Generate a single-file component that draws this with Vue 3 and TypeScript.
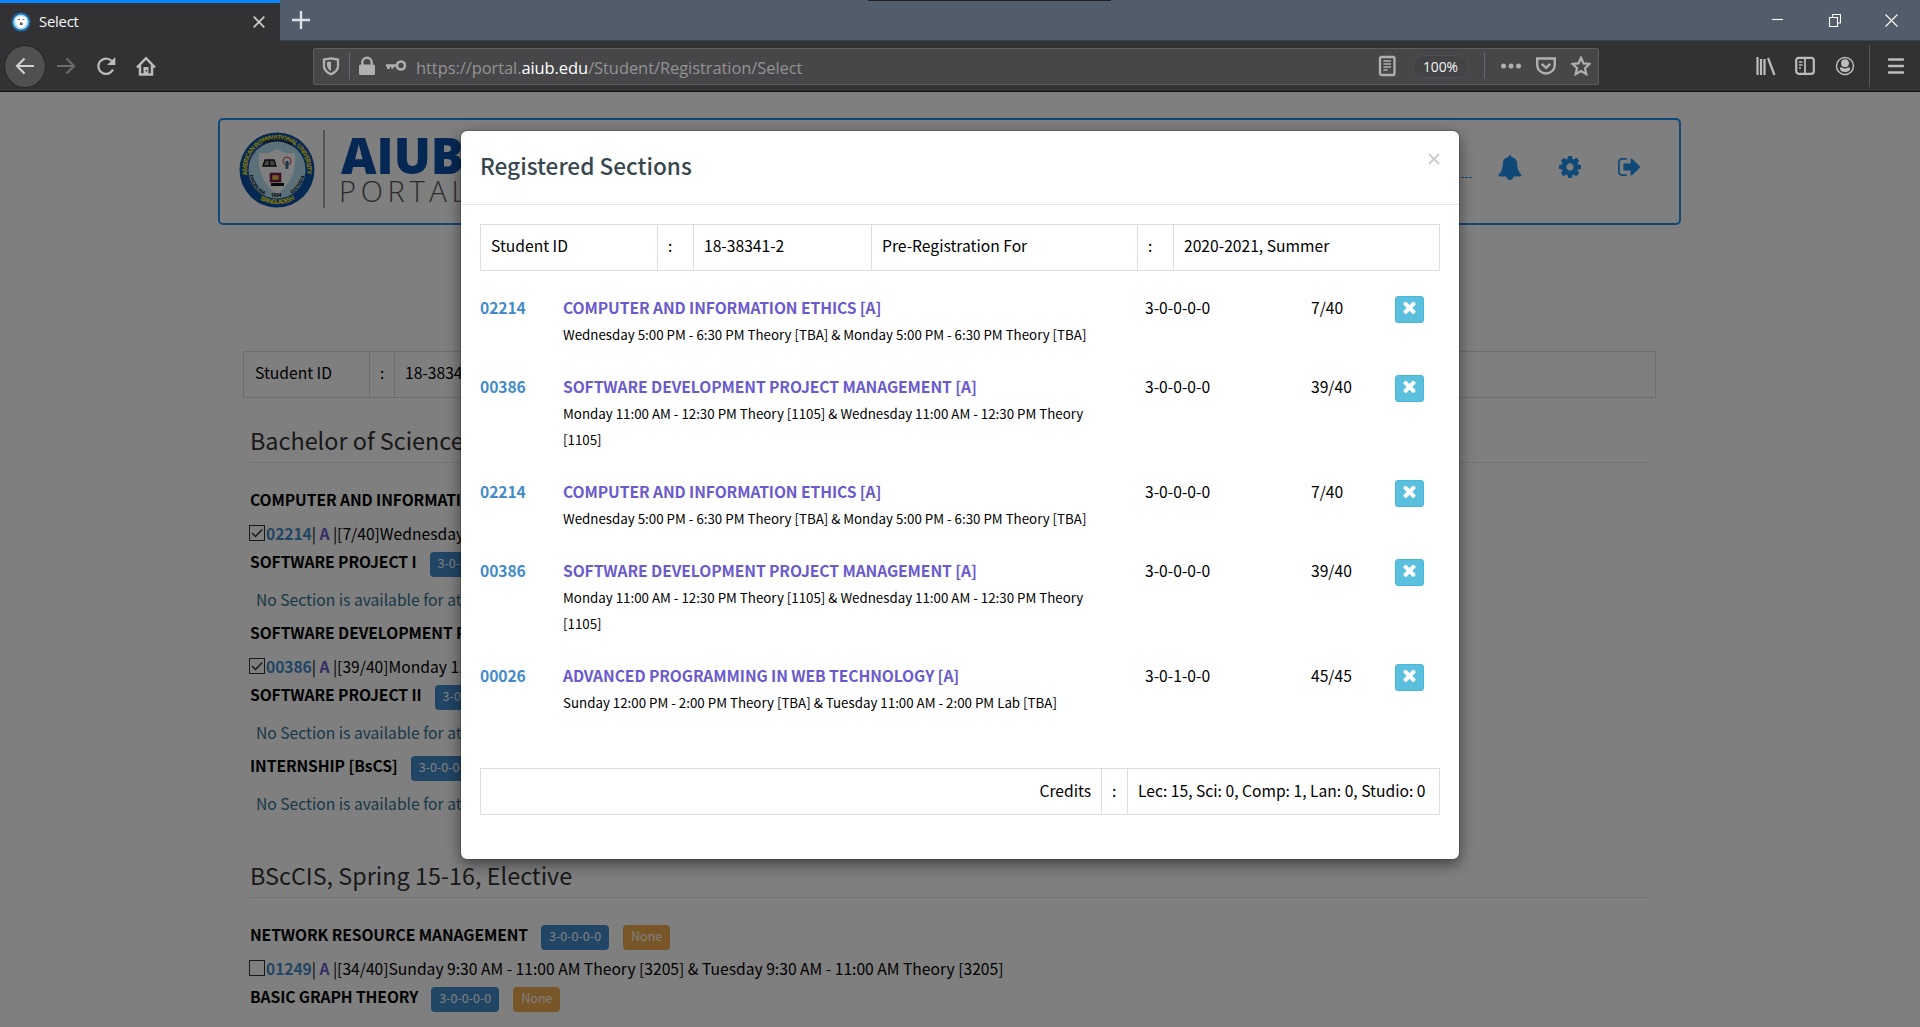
<script setup lang="ts">
interface Section {
  id: string
  title: string
  time: string
  credit: string
  count: string
}

interface Course {
  title: string
  credit?: string
  prerequisite?: string
  section?: { id: string; text: string; checked: boolean }
}

const ethics: Section = {
  id: '02214',
  title: 'COMPUTER AND INFORMATION ETHICS [A]',
  time: 'Wednesday 5:00 PM - 6:30 PM Theory [TBA] & Monday 5:00 PM - 6:30 PM Theory [TBA]',
  credit: '3-0-0-0-0',
  count: '7/40',
}
const management: Section = {
  id: '00386',
  title: 'SOFTWARE DEVELOPMENT PROJECT MANAGEMENT [A]',
  time: 'Monday 11:00 AM - 12:30 PM Theory [1105] & Wednesday 11:00 AM - 12:30 PM Theory [1105]',
  credit: '3-0-0-0-0',
  count: '39/40',
}
const sections: Section[] = [
  ethics,
  management,
  ethics,
  management,
  {
    id: '00026',
    title: 'ADVANCED PROGRAMMING IN WEB TECHNOLOGY [A]',
    time: 'Sunday 12:00 PM - 2:00 PM Theory [TBA] & Tuesday 11:00 AM - 2:00 PM Lab [TBA]',
    credit: '3-0-1-0-0',
    count: '45/45',
  },
]

const groups: { name: string; courses: Course[] }[] = [
  {
    name: 'Bachelor of Science',
    courses: [
      { title: 'COMPUTER AND INFORMATI', section: { id: '02214', text: '[7/40]Wednesday', checked: true } },
      { title: 'SOFTWARE PROJECT I', credit: '3-0-0-0-0' },
      { title: 'SOFTWARE DEVELOPMENT P', section: { id: '00386', text: '[39/40]Monday 11', checked: true } },
      { title: 'SOFTWARE PROJECT II', credit: '3-0-0-0-0' },
      { title: 'INTERNSHIP [BsCS]', credit: '3-0-0-0-0' },
    ],
  },
  {
    name: 'BScCIS, Spring 15-16, Elective',
    courses: [
      {
        title: 'NETWORK RESOURCE MANAGEMENT',
        credit: '3-0-0-0-0',
        prerequisite: 'None',
        section: {
          id: '01249',
          text: '[34/40]Sunday 9:30 AM - 11:00 AM Theory [3205] & Tuesday 9:30 AM - 11:00 AM Theory [3205]',
          checked: false,
        },
      },
      { title: 'BASIC GRAPH THEORY', credit: '3-0-0-0-0', prerequisite: 'None' },
    ],
  },
]
</script>

<template>
  <div class="browser">
    <div class="tabs">
      <div class="tab">
        <svg class="favicon" viewBox="0 0 20 20">
          <circle cx="10" cy="10" r="9.5" fill="#1d6fae" />
          <circle cx="10" cy="10" r="7.6" fill="#a8dcf5" />
          <path d="M4.500 5.500 10 4l5.500 1.500v5q-1 4-5.500 6-4.500-2-5.500-6z" fill="#fff" />
          <path d="M6.500 7.500h2.500M11.500 7.500h2" stroke="#777" fill="none" />
          <path d="M9 10.500h2.500v2.500H9z" fill="#643" />
        </svg>
        <span class="tab-name">Select</span>
        <svg class="tab-close" viewBox="0 0 12 12"><path d="M.7.7l10.600 10.600M11.300.7.7 11.300" /></svg>
      </div>
      <svg class="plus" viewBox="0 0 18 18"><path d="M9 0v18M0 9h18" /></svg>
      <div class="notch"></div>
      <div class="window-buttons">
        <svg viewBox="0 0 13 13"><path d="M1 5.500h11" /></svg>
        <svg viewBox="0 0 13 13"><path d="M1.500 3.500h8v9h-8zM4.500 3.500v-3h8v8.500H9.500" /></svg>
        <svg viewBox="0 0 13 13"><path d="M.5.5l12 12M12.500.5l-12 12" /></svg>
      </div>
    </div>

    <div class="toolbar">
      <div class="back"><svg class="ico" viewBox="0 0 20 20"><path d="M19 10H2M9.500 2.500 2 10l7.500 7.500" /></svg></div>
      <svg class="ico forward" viewBox="0 0 20 20"><path d="M1 10h17M10.500 2.500 18 10l-7.500 7.500" /></svg>
      <svg class="ico reload" viewBox="0 0 20 20"><path d="M15.500 4.800A7.700 7.700 0 1 0 17 13.500" /><path class="fill" d="M19.300 1v8H11z" /></svg>
      <svg class="ico home" viewBox="0 0 20 20"><path d="M1 11.500 10 2.200l9 9.300M4 9.500v9h12v-9" stroke-width="2.500" /><path class="fill" d="M7.500 11h5v8h-5z" /><path d="M10.500 14v1.500" stroke="#333" stroke-width="1.500" /></svg>
      <div class="urlbar">
        <svg class="ico shield" viewBox="0 0 20 20"><path d="M10 2.300 17 3.500v6.800c0 3.500-3.500 6.500-7 8-3.500-1.500-7-4.500-7-8V3.500z" stroke-width="2.300" /><path class="fill" d="M10 5.500v9.500c-2.500-1.500-4-3.500-4-5.500V6z" /></svg>
        <i class="bar"></i>
        <svg class="ico lock" viewBox="0 0 20 20"><path d="M5.300 9V6.500a4.700 4.700 0 0 1 9.400 0V9" stroke-width="2.400" /><rect class="fill" x="2" y="8.500" width="16" height="10.500" rx="1.500" /></svg>
        <svg class="ico key" viewBox="0 0 20 20"><circle cx="15" cy="9.500" r="4" stroke-width="2.600" /><path d="M11 9.500H0M2.500 9v4M6.500 9v3.500" stroke-width="2.600" /></svg>
        <span class="url">https://portal.<b>aiub.edu</b>/Student/Registration/Select</span>
        <svg class="ico reader" viewBox="0 0 20 20"><rect x="3" y="1" width="14.500" height="18" rx="1.500" stroke-width="2.300" /><path d="M6.500 5h7.500M6.500 8h7.500M6.500 11h7.500M6.500 14h4" stroke-width="1.400" /></svg>
        <span class="zoom">100%</span>
        <i class="bar bar-right"></i>
        <svg class="ico more" viewBox="0 0 20 20"><circle class="fill" cx="2.500" cy="10" r="2.500" /><circle class="fill" cx="10" cy="10" r="2.500" /><circle class="fill" cx="17.500" cy="10" r="2.500" /></svg>
        <svg class="ico pocket" viewBox="0 0 20 20"><path d="M1.200 2.500h17.600V9a8.800 8.500 0 0 1-17.600 0z" stroke-width="2.400" /><path d="M5.800 7.800 10 11.800l4.200-4" stroke-width="2.500" /></svg>
        <svg class="ico star" viewBox="0 0 20 20"><path d="M10 1.800l2.500 5.600 6 .6-4.500 4.100 1.300 6-5.300-3.100-5.300 3.100 1.300-6L1.500 8l6-.6z" /></svg>
      </div>
      <svg class="ico library" viewBox="0 0 20 20"><path d="M1.500 1v18M5 3v16M8.500 3v16M12 2l6.500 17" /></svg>
      <svg class="ico sidebar" viewBox="0 0 20 20"><rect x="1.200" y="1.800" width="17.600" height="16" rx="2.500" /><path d="M10 2v16" stroke-width="1.800" /><path d="M4 6h3.500M4 9h3.500M4 12h2" stroke-width="1.300" /></svg>
      <svg class="ico account" viewBox="0 0 20 20"><circle cx="10" cy="10" r="8.500" stroke-width="1.500" /><circle class="fill" cx="10" cy="7.200" r="3.900" /><path class="fill" d="M4.800 11.500h2.200q3 2 6 0h2.200q0 4.500-5.200 4.500t-5.200-4.500z" /></svg>
      <i class="split"></i>
      <svg class="ico menu" viewBox="0 0 20 20"><path d="M3 3.500h14M3 10h14M3 16.500h14" stroke-width="2.400" stroke-linecap="round" /></svg>
    </div>

    <div class="page">
      <header class="portal">
        <svg class="seal" viewBox="0 0 76 76">
          <defs>
            <path id="seal-top" d="M8.500 43A30 30 0 1 1 67.500 43" />
            <path id="seal-bottom" d="M17 65A34.500 34.500 0 0 0 59 65" />
            <path id="seal-left" d="M10 38A28 28 0 0 0 29 64.500" />
            <path id="seal-right" d="M47 64.500A28 28 0 0 0 66 38" />
            <path id="seal-inner" d="M18 20A24 24 0 0 1 58 20" />
          </defs>
          <circle cx="38" cy="38" r="37.500" fill="#0b51a5" />
          <circle cx="38" cy="38" r="28.500" fill="#b9e1f3" />
          <path d="M38 16c-3 4-10 6-18 5-1 14 2 30 18 41 16-11 19-27 18-41-8 1-15-1-18-5z" fill="#fff" />
          <g class="seal-gold">
            <text><textPath href="#seal-top" textLength="104">AMERICAN INTERNATIONAL UNIVERSITY</textPath></text>
            <text><textPath href="#seal-bottom" startOffset="5" textLength="36">BANGLADESH</textPath></text>
          </g>
          <g class="seal-black">
            <text><textPath href="#seal-inner" startOffset="10">PRAESIDIUM</textPath></text>
            <text><textPath href="#seal-left" startOffset="5">DISCIPLINA</textPath></text>
            <text><textPath href="#seal-right" startOffset="6">CUSTODIA</textPath></text>
            <text x="32" y="65">1994</text>
          </g>
          <path d="M24 34l2-6h9l2 6zM30.500 28v6" fill="#888" stroke="#111" stroke-width="1.300" />
          <path d="M48 29v8" stroke="#197fa8" stroke-width="3" />
          <circle cx="48" cy="29" r="4" fill="none" stroke="#d33" />
          <path d="M32 42h9v7h-9z" fill="#e7bf4b" stroke="#7a1748" stroke-width="2.500" />
          <path d="M32 52.500h13" stroke="#111" stroke-width="3" />
        </svg>
        <i class="logo-line"></i>
        <div class="brand"><strong>AIUB</strong><span>PORTAL</span></div>
        <div class="actions">
          <i class="dots"></i>
          <svg class="bell" viewBox="64 0 1664 1792"><path d="M1728 1408q0 52-38 90t-90 38h-448q0 106-75 181t-181 75-181-75-75-181h-448q-52 0-90-38t-38-90q50-42 91-88t85-119.500 74.500-158.500 50-206 19.500-260q0-152 117-282.500t307-158.500q-8-19-8-39 0-40 28-68t68-28 68 28 28 68q0 20-8 39 190 28 307 158.500t117 282.500q0 139 19.500 260t50 206 74.500 158.500 85 119.500 91 88z" /></svg>
          <svg class="cog" viewBox="0 -128 1536 1536"><path fill-rule="evenodd" d="M1024 640q0 106-75 181t-181 75-181-75-75-181 75-181 181-75 181 75 75 181zm512-109v222q0 12-8 23t-20 13l-185 28q-19 54-39 91 35 50 107 138 10 12 10 25t-9 23q-27 37-99 108t-94 71q-12 0-26-9l-138-108q-44 23-91 38-16 136-29 186-7 28-36 28h-222q-14 0-24.500-8.500t-11.500-21.500l-28-184q-49-16-90-37l-141 107q-10 9-25 9-14 0-25-11-126-114-165-168-7-10-7-23 0-12 8-23 15-21 51-66.500t54-70.500q-27-50-41-99l-183-27q-13-2-21-12.500t-8-23.500v-222q0-12 8-23t19-13l186-28q14-46 39-92-40-57-107-138-10-12-10-24 0-10 9-23 26-36 98.500-107.500t94.500-71.500q13 0 26 10l138 107q44-23 91-38 16-136 29-186 7-28 36-28h222q14 0 24.500 8.500t11.500 21.500l28 184q49 16 90 37l142-107q9-9 24-9 13 0 25 10 129 119 165 170 7 8 7 22 0 12-8 23-15 21-51 66.500t-54 70.500q26 50 41 98l183 28q13 2 21 12.500t8 23.500z" /></svg>
          <svg class="exit" viewBox="64 256 1568 1280"><path d="M704 1440q0 4 1 20t.5 26.500-3 23.500-10 19.500-20.500 6.500h-320q-119 0-203.500-84.500t-84.500-203.500v-704q0-119 84.500-203.500t203.500-84.500h320q13 0 22.500 9.500t9.500 22.500q0 4 1 20t.5 26.500-3 23.500-10 19.500-20.500 6.500h-320q-66 0-113 47t-47 113v704q0 66 47 113t113 47h312l11.500 1 11.500 3 8 5.500 7 9 2 13.500zm928-544q0 26-19 45l-544 544q-19 19-45 19t-45-19-19-45v-288h-448q-26 0-45-19t-19-45v-384q0-26 19-45t45-19h448v-288q0-26 19-45t45-19 45 19l544 544q19 19 19 45z" /></svg>
        </div>
      </header>

      <div class="info page-info">
        <span class="cell">Student ID</span><span class="cell">:</span><span class="cell">18-38341-2</span>
      </div>

      <section v-for="group in groups" :key="group.name" class="group">
        <h2>{{ group.name }}</h2>
        <template v-for="course in group.courses" :key="course.title">
          <div class="course">
            <strong>{{ course.title }}</strong>
            <span v-if="course.credit" class="badge">{{ course.credit }}</span>
            <span v-if="course.prerequisite" class="badge orange">{{ course.prerequisite }}</span>
          </div>
          <div v-if="course.section" class="pick">
            <svg class="check" viewBox="0 0 16 16"><rect x=".5" y=".5" width="15" height="15" /><path v-if="course.section.checked" d="M3 8l3.500 3.500L13.200 4.500" /></svg>
            <b class="code">{{ course.section.id }}</b>|&nbsp;<b class="letter">A</b>&nbsp;|{{ course.section.text }}
          </div>
          <div v-else-if="!course.prerequisite" class="empty">No Section is available for at</div>
        </template>
      </section>

      <div class="backdrop">
        <div class="modal">
          <div class="modal-head">
            <h1>Registered Sections</h1>
            <svg viewBox="0 0 12 12"><path d="M1 1l10 10M11 1 1 11" /></svg>
          </div>
          <div class="modal-body">
            <div class="info modal-info">
              <span class="cell">Student ID</span><span class="cell">:</span><span class="cell">18-38341-2</span>
              <span class="cell">Pre-Registration For</span><span class="cell">:</span><span class="cell">2020-2021, Summer</span>
            </div>
            <div v-for="(s, i) in sections" :key="i" class="row">
              <b class="row-id">{{ s.id }}</b>
              <div class="row-main">
                <b>{{ s.title }}</b>
                <p>{{ s.time }}</p>
              </div>
              <span class="row-credit">{{ s.credit }}</span>
              <span class="row-count">{{ s.count }}</span>
              <button>
                <svg viewBox="302 302 1188 1252"><path d="M1490 1322q0 40-28 68l-136 136q-28 28-68 28t-68-28l-294-294-294 294q-28 28-68 28t-68-28l-136-136q-28-28-28-68t28-68l294-294-294-294q-28-28-28-68t28-68l136-136q28-28 68-28t68 28l294 294 294-294q28-28 68-28t68 28l136 136q28 28 28 68t-28 68l-294 294 294 294q28 28 28 68z" /></svg>
              </button>
            </div>
            <div class="info credits">
              <span class="cell">Credits</span><span class="cell">:</span><span class="cell">Lec: 15, Sci: 0, Comp: 1, Lan: 0, Studio: 0</span>
            </div>
          </div>
        </div>
      </div>
    </div>
  </div>
</template>

<style>
body {
  margin: 0;
  overflow: hidden;
}
</style>

<style scoped>
* {
  box-sizing: border-box;
}
.browser {
  width: 1920px;
  height: 1027px;
  display: flex;
  flex-direction: column;
  overflow: hidden;
  font-family: "Open Sans", "Noto Sans", sans-serif;
}
svg {
  display: block;
  flex: none;
}
.tabs {
  flex: none;
  height: 41px;
  display: flex;
  background: #525d6b;
  border-bottom: 1px solid #3a4552;
}
.tab {
  width: 280px;
  height: 41px;
  background: #323234;
  border-top: 3px solid #0a84ff;
  display: flex;
  align-items: center;
  padding: 0 15px 1px 11px;
}
.favicon {
  width: 20px;
  height: 20px;
}
.tab-name {
  margin: 0 0 2px 8px;
  color: #f9f9fa;
  font-size: 14.800px;
  letter-spacing: -0.2px;
}
.tab-close {
  width: 12px;
  height: 12px;
  margin-left: auto;
  fill: none;
  stroke: #c8c8c9;
  stroke-width: 1.8;
}
.plus {
  width: 18px;
  height: 18px;
  margin: 11px 0 0 12px;
  stroke: #dcdfe2;
  stroke-width: 2.4;
}
.notch {
  width: 243px;
  height: 1px;
  margin-left: 558px;
  background: #222;
}
.window-buttons {
  display: flex;
  gap: 44px;
  margin: 14px 22px 0 auto;
  height: 13px;
}
.window-buttons svg {
  width: 13px;
  height: 13px;
  fill: none;
  stroke: #fff;
  stroke-width: 1.1;
}
.toolbar {
  flex: none;
  height: 51px;
  padding-left: 5px;
  background: #323234;
  border-bottom: 1px solid #0c0c0d;
  display: flex;
  align-items: center;
}
.ico {
  width: 20px;
  height: 20px;
  fill: none;
  stroke: #bcbcbd;
  stroke-width: 2.2;
}
.ico .fill {
  fill: #bcbcbd;
  stroke: none;
}
.back {
  width: 40px;
  height: 41px;
  border-radius: 50%;
  background: #505051;
  box-shadow: 0 0 0 1px #252527;
  display: flex;
  align-items: center;
  justify-content: center;
}
.back .ico {
  stroke: #d0d0d1;
}
.forward {
  margin-left: 11px;
  stroke: #6b6b6c;
}
.reload {
  margin-left: 20px;
}
.home {
  margin-left: 20px;
}
.urlbar {
  width: 1286px;
  height: 37px;
  margin-left: 157px;
  border: 1px solid #5d5d5f;
  border-radius: 2px;
  background: #474749;
  display: flex;
  align-items: center;
  padding: 0 7px;
}
.urlbar .ico {
  stroke: #b0b0b1;
}
.urlbar .fill {
  fill: #b0b0b1;
  stroke: none;
}
.urlbar .reader {
  height: 22px;
}
.bar {
  width: 1px;
  height: 26px;
  margin: 0 7px 0 8px;
  background: #626973;
}
.key {
  margin-left: 9px;
}
.url {
  margin: 3px auto 0 10px;
  font-size: 16.500px;
  letter-spacing: -0.08px;
  color: #939394;
}
.url b {
  font-weight: 400;
  color: #fff;
}
.zoom {
  width: 57px;
  height: 23px;
  margin-left: 15px;
  border: 1px solid #505053;
  border-radius: 12px;
  background: #434346;
  color: #f4f4f4;
  font-size: 13.800px;
  line-height: 22px;
  text-align: center;
}
.bar-right {
  margin: 0 16px 0 15px;
}
.pocket,
.star {
  margin-left: 15px;
}
.library {
  margin-left: 157px;
}
.sidebar {
  margin-left: 19px;
}
.account {
  margin-left: 20px;
}
.split {
  width: 1px;
  height: 42px;
  margin-left: 14px;
  background: #59595b;
}
.menu {
  margin-left: 16px;
}

.page {
  position: relative;
  flex: 1;
  background: #fff;
  color: #000;
  font-family: "Noto Sans CJK SC", "Noto Sans", sans-serif;
  font-size: 15.650px;
  line-height: 26px;
  overflow: hidden;
  white-space: nowrap;
}
.page b,
.page strong {
  letter-spacing: -0.09px;
}
.portal {
  width: 1463px;
  height: 107px;
  margin: 26px 0 0 218px;
  border: 2px solid #1c8ff0;
  border-radius: 5px;
  display: flex;
  align-items: flex-start;
}
.seal {
  width: 76px;
  height: 76px;
  margin: 12px 0 0 19px;
  overflow: visible;
}
.seal-gold {
  font: 700 6.500px "Open Sans", sans-serif;
  fill: #ffe51e;
}
.seal-black {
  font: 700 4.500px "Open Sans", sans-serif;
  fill: #000;
}
.logo-line {
  width: 2px;
  height: 78px;
  margin: 10px 0 0 8px;
  background: #aaa;
}
.brand {
  margin: 8px 0 0 16px;
  display: flex;
  flex-direction: column;
  font-family: "Open Sans", sans-serif;
}
.page .brand strong {
  height: 46px;
  font-size: 49px;
  line-height: 54px;
  font-weight: 800;
  letter-spacing: 0;
  color: #0b4fa8;
}
.brand span {
  margin-left: -2px;
  font-size: 29px;
  line-height: 33px;
  font-weight: 300;
  letter-spacing: 4.700px;
  color: #555;
}
.actions {
  margin: 35px 39px 0 auto;
  display: flex;
  align-items: flex-start;
}
.actions svg {
  fill: #1f93f0;
}
.dots {
  width: 11px;
  margin: 22px 26px 0 0;
  border-top: 1px dashed #2196f3;
}
.bell {
  width: 24px;
  height: 25px;
}
.cog {
  width: 22px;
  height: 22px;
  margin: 1px 0 0 37px;
}
.exit {
  width: 22px;
  height: 18px;
  margin: 3px 0 0 37px;
}
.info {
  display: flex;
  height: 47px;
  border: 1px solid #ddd;
}
.cell {
  padding: 8px 10px 0;
  border-left: 1px solid #ddd;
}
.cell:first-child {
  border-left: 0;
}
.page-info {
  width: 1413px;
  margin: 126px 0 0 243px;
}
.page-info .cell:nth-child(1) {
  width: 125px;
  padding-left: 11px;
}
.page-info .cell:nth-child(2) {
  width: 25px;
}
.group {
  width: 1401px;
  margin-left: 249px;
}
.group h2 {
  height: 65px;
  margin: 0 0 23px;
  padding: 25px 0 0 1px;
  border-bottom: 1px solid #e5e5e5;
  font-size: 23.400px;
  line-height: 34px;
  font-weight: 400;
  color: #333;
}
.group + .group h2 {
  height: 75px;
  padding-top: 35px;
}
.course {
  height: 30px;
  padding: 1px 0 0 1px;
  display: flex;
}
.badge {
  height: 25px;
  margin: 3px 0 0 14px;
  padding: 0 8px;
  border-radius: 4px;
  background: #428bca;
  color: #fff;
  font-size: 12.500px;
  line-height: 22px;
}
.course strong + .badge {
  margin-left: 13px;
}
.orange {
  background: #f0ad4e;
}
.pick {
  height: 32px;
  padding-top: 5px;
  display: flex;
}
.check {
  width: 16px;
  height: 16px;
  margin: 4px 1px 0 0;
  fill: none;
  stroke: #333;
}
.check path {
  stroke-width: 1.5;
}
.code {
  color: #428bca;
}
.letter {
  color: #6a5acd;
}
.empty {
  height: 41px;
  padding: 9px 0 0 7px;
  color: #31708f;
}

.backdrop {
  position: absolute;
  inset: 0;
  background: rgba(0, 0, 0, 0.5);
}
.modal {
  width: 998px;
  height: 728px;
  margin: 39px auto 0;
  border-radius: 6px;
  background: #fff;
  box-shadow: 0 5px 15px rgba(0, 0, 0, 0.5), 0 0 0 1px rgba(0, 0, 0, 0.15);
}
.modal-head {
  height: 74px;
  padding: 0 19px;
  border-bottom: 1px solid #e5e5e5;
  display: flex;
  justify-content: space-between;
}
.modal-head h1 {
  margin: 18px 0 0;
  font-size: 22.600px;
  line-height: 34px;
  font-weight: 500;
  color: #37474f;
}
.modal-head svg {
  width: 12px;
  height: 12px;
  margin-top: 22px;
  stroke: #ccc;
  stroke-width: 2;
}
.modal-body {
  padding: 19px 19px 0;
}
.modal-info {
  margin-bottom: 23px;
}
.modal-info .cell:nth-child(1) {
  width: 176px;
}
.modal-info .cell:nth-child(2),
.modal-info .cell:nth-child(5) {
  width: 36px;
}
.modal-info .cell:nth-child(3) {
  width: 178px;
}
.modal-info .cell:nth-child(4) {
  width: 266px;
}
.modal-info .cell:nth-child(6) {
  flex: 1;
}
.row {
  display: flex;
  padding-bottom: 25px;
  line-height: 27px;
}
.row b {
  font-weight: 700;
}
.row-id {
  width: 83px;
  color: #428bca;
}
.row-main {
  width: 582px;
  padding-right: 50px;
  white-space: normal;
}
.row-main b {
  display: block;
  color: #6a5acd;
}
.row-main p {
  margin: 0;
  padding-top: 1px;
  font-size: 13.320px;
  line-height: 26px;
}
.row-credit {
  width: 166px;
}
.row-count {
  width: 84px;
}
.row button {
  width: 29px;
  height: 27px;
  margin: 2px 0 0;
  padding: 0 0 5px 7px;
  border: 1px solid #46b8da;
  border-radius: 3px;
  background: #5bc0de;
}
.row button svg {
  width: 13px;
  height: 13px;
  fill: #fff;
}
.credits {
  margin-top: 27px;
}
.credits .cell {
  padding-top: 9px;
}
.credits .cell:nth-child(1) {
  width: 620px;
  text-align: right;
}
.credits .cell:nth-child(2) {
  width: 26px;
}
.credits .cell:nth-child(3) {
  flex: 1;
}
</style>
